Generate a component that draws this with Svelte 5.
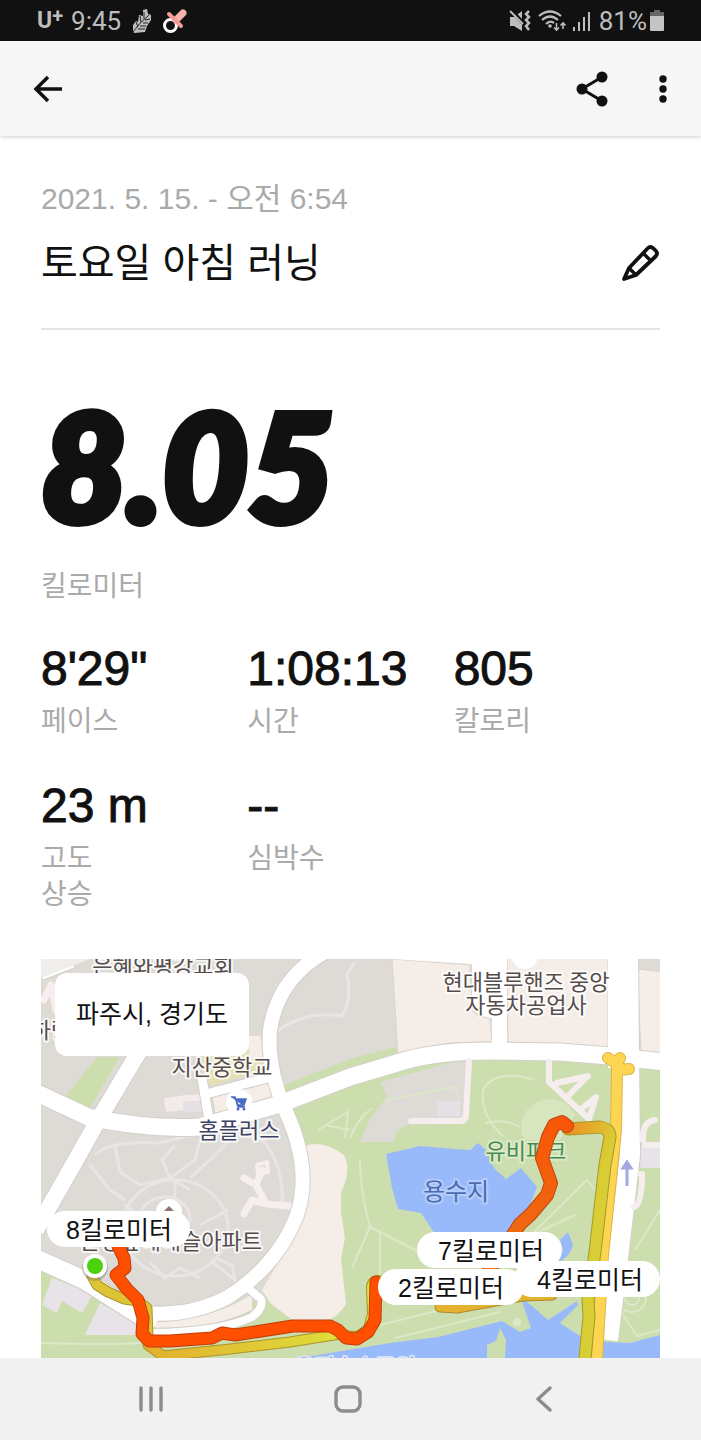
<script lang="ts">
    type Stat = { value: string; label: string };

    const stats: Stat[] = [
        { value: `8'29"`, label: '페이스' },
        { value: '1:08:13', label: '시간' },
        { value: '805', label: '칼로리' },
        { value: '23 m', label: '고도\n상승' },
        { value: '--', label: '심박수' },
    ];

    // Kilometre pills on the map, x/y is the top left corner
    const pills = [
        { x: 417, y: 1232, w: 145, textX: 491, text: '7킬로미터' },
        { x: 514, y: 1261, w: 146, textX: 590, text: '4킬로미터' },
        { x: 378, y: 1269, w: 146, textX: 451, text: '2킬로미터' },
        { x: 47, y: 1211, w: 143, textX: 119, text: '8킬로미터' },
    ];

    // Each route is drawn twice: dark casing first, then the fill
    const routes = [
        { d: 'M608 1058L617 1064L620 1058M617 1062V1070L629 1069M617 1070L616 1130L613 1160L603 1255L597 1358', fill: '#fcd552', edge: '#e0b445', w: 10 },
        { d: 'M92 1276L97 1285L108 1292L124 1299L138 1301L147 1308L148 1338', fill: '#dec434', edge: '#a9942b', w: 9 },
        { d: 'M148 1345L163 1356L230 1349L290 1342L340 1334', fill: 'url(#lowRoute)', edge: '#a9942b', w: 9 },
        { d: 'M340 1334L358 1335L367 1328L371 1314L370 1287Q371 1279 379 1279', fill: '#e3de3b', edge: '#a9942b', w: 6 },
        { d: 'M568 1129L600 1127Q610 1129 610 1137L605 1165L595 1252L588 1300L589 1316L585 1358', fill: 'url(#highRoute)', edge: '#a29a26', w: 11 },
        { d: 'M440 1307L457 1308L523 1296L552 1295', fill: '#e5b22f', edge: '#a98a2b', w: 9 },
        { d: 'M567 1126L562 1122L554 1125L548 1137L542 1158L551 1183L547 1195L531 1214L520 1224L488 1272', fill: 'url(#orangeRoute)', edge: '#bd460e', w: 12 },
        { d: 'M118 1246L124 1258L125 1268L116 1275L127 1289L138 1300L143 1318L142 1334L149 1341L170 1341L212 1338L222 1333L235 1335L293 1326H330L338 1330L346 1338L357 1339L368 1332L375 1320L376 1282', fill: '#fe5000', edge: '#c23c08', w: 11 },
    ];

    const mapLabels = [
        { x: 163, y: 974, text: '은혜와평강교회', tone: 'brown' },
        { x: 51, y: 1038, text: '하랑', tone: 'brown' },
        { x: 222, y: 1075, text: '지산중학교', tone: 'brown' },
        { x: 239, y: 1138, text: '홈플러스', tone: 'navy' },
        { x: 526, y: 990, text: '현대블루핸즈 중앙', tone: 'brown' },
        { x: 526, y: 1013, text: '자동차공업사', tone: 'brown' },
        { x: 171, y: 1249, text: '운정숲해해슬아파트', tone: 'brown' },
        { x: 355, y: 1375, text: '운정호수공원', tone: 'water' },
    ];
</script>

<div class="screen">
    <header class="status-bar">
        <div class="status-group">
            <span class="carrier">U<sup>+</sup></span>
            <span class="clock">9:45</span>
            <svg class="feather" width="20" height="26" viewBox="0 0 20 26" aria-hidden="true">
                <path d="M1 23L1 17L4 13L6 14L7 7L11 8L11 2L15 1L16 6L19 7L19 12L15 18L13 24L2 25Z" fill="#bdbdbd" />
                <path d="M1 24Q7 15 17 7M8 18L14 18M6 21L13 21M11 15L16 15M13 12L18 11M4 14L6 19M8 8L9 14M12 4L12 11" stroke="#111" stroke-width="0.900" fill="none" />
            </svg>
            <svg class="pacifier" width="26" height="26" viewBox="0 0 26 26" aria-hidden="true">
                <circle cx="8.500" cy="17.500" r="6" fill="none" stroke="#fff" stroke-width="3" />
                <path d="M14 12L21 5" stroke="#f5b3b0" stroke-width="7" stroke-linecap="round" />
                <path d="M7 6L19 18" stroke="#f29a97" stroke-width="4" stroke-linecap="round" />
            </svg>
        </div>
        <div class="status-group right">
            <svg width="22" height="22" viewBox="0 0 22 22" aria-hidden="true">
                <path d="M1 7H5L13 1V21L5 16H1Z" fill="#bdbdbd" />
                <path d="M2 0L14 13" stroke="#111" stroke-width="4" />
                <path d="M1 1L14 14" stroke="#bdbdbd" stroke-width="2" />
                <path d="M20 1L17 4L20 7L17 10L20 13L17 16L20 20" fill="none" stroke="#bdbdbd" stroke-width="2.500" />
            </svg>
            <svg width="28" height="22" viewBox="0 0 28 22" aria-hidden="true">
                <path d="M1 6Q12 -3 23 6M4 10Q12 3 20 10M8 14Q12 10 16 13" fill="none" stroke="#bdbdbd" stroke-width="2.200" />
                <circle cx="12" cy="16" r="1.800" fill="#bdbdbd" />
                <path d="M18.500 13V20M16 17.500L18.500 20L21 17.500M25 19V13M22.500 15.500L25 13L27.500 15.500" fill="none" stroke="#bdbdbd" stroke-width="1.600" />
            </svg>
            <svg width="19" height="20" viewBox="0 0 19 20" aria-hidden="true">
                <path d="M1 16V20M6 11V20M11 6V20M16 1V20" stroke="#bdbdbd" stroke-width="2" />
            </svg>
            <span class="battery-level">81%</span>
            <svg class="battery" width="14" height="22" viewBox="0 0 14 22" aria-hidden="true">
                <path d="M4 0H10V2H13Q14 2 14 3V6H0V3Q0 2 1 2H4Z" fill="#666" />
                <path d="M0 6H14V20Q14 21 13 21H1Q0 21 0 20Z" fill="#c4c4c4" />
            </svg>
        </div>
    </header>

    <nav class="app-bar">
        <button aria-label="뒤로">
            <svg width="28" height="28" viewBox="0 0 28 28" aria-hidden="true">
                <path d="M14 2L2 14L14 26M2 14H28" fill="none" stroke="#111" stroke-width="3.400" />
            </svg>
        </button>
        <div class="actions">
            <button aria-label="공유">
                <svg width="32" height="36" viewBox="0 0 32 36" aria-hidden="true">
                    <path d="M26 6L6 18L26 30" fill="none" stroke="#111" stroke-width="3" />
                    <circle cx="26" cy="6" r="5.500" fill="#111" />
                    <circle cx="6" cy="18" r="5.500" fill="#111" />
                    <circle cx="26" cy="30" r="5.500" fill="#111" />
                </svg>
            </button>
            <button aria-label="더보기">
                <svg width="8" height="28" viewBox="0 0 8 28" aria-hidden="true">
                    <circle cx="4" cy="4" r="3.700" fill="#111" />
                    <circle cx="4" cy="14" r="3.700" fill="#111" />
                    <circle cx="4" cy="24" r="3.700" fill="#111" />
                </svg>
            </button>
        </div>
    </nav>

    <main>
        <p class="date">2021. 5. 15. - 오전 6:54</p>
        <div class="title-row">
            <h1>토요일 아침 러닝</h1>
            <button aria-label="제목 수정">
                <svg width="38" height="38" viewBox="0 0 38 38" aria-hidden="true">
                    <path d="M2 35L7 24L26 4Q28 2 31 4L34 7Q36 9 34 12L14 31Z" fill="none" stroke="#111" stroke-width="3.800" stroke-linejoin="round" />
                    <path d="M21 9L29 17M7 24L14 31" stroke="#111" stroke-width="3.400" />
                    <path d="M1 37L3 30L8 34Z" fill="#111" />
                </svg>
            </button>
        </div>

        <p class="distance">8.05</p>
        <p class="label">킬로미터</p>

        <dl class="stats">
            {#each stats as stat}
                <div class="stat">
                    <dd>{stat.value}</dd>
                    <dt class="label">{stat.label}</dt>
                </div>
            {/each}
        </dl>

        <section class="map">
            <svg viewBox="41 959 619 399" role="img" aria-label="러닝 경로">
                <defs>
                    <linearGradient id="highRoute" gradientUnits="userSpaceOnUse" x1="566" y1="1128" x2="612" y2="1145">
                        <stop offset="0" stop-color="#f08c20" />
                        <stop offset="1" stop-color="#d9cd35" />
                    </linearGradient>
                    <linearGradient id="orangeRoute" gradientUnits="userSpaceOnUse" x1="560" y1="1120" x2="500" y2="1250">
                        <stop offset="0" stop-color="#f85606" />
                        <stop offset="1" stop-color="#ee6c12" />
                    </linearGradient>
                    <linearGradient id="lowRoute" gradientUnits="userSpaceOnUse" x1="150" y1="0" x2="340" y2="0">
                        <stop offset="0" stop-color="#e2b02f" />
                        <stop offset="1" stop-color="#dede3b" />
                    </linearGradient>
                </defs>

                <!-- land -->
                <rect x="41" y="959" width="619" height="399" fill="#dedbd6" />
                <g fill="#cddeae">
                    <path d="M97 1057H120L90 1108L65 1097Z" />
                    <path d="M281 1086L350 1059L396 1047L397 1062L281 1100Z" />
                    <path d="M288 1112L350 1086L407 1066L460 1056H608L660 1068V1358H41V1258L150 1325L262 1300L300 1200Z" />
                </g>
                <path d="M302 1147Q322 1138 344 1155Q352 1170 341 1193V1212L345 1238L341 1258L346 1304Q335 1322 318 1321L295 1322L270 1303L262 1290L300 1225Z" fill="#f5ede7" />
                <path d="M380 1082L467 1058L465 1123L407 1125L397 1130L393 1142H360L370 1119L387 1097Z" fill="#dedbd6" />
                <path d="M437 1101H460V1116H437Z" fill="#e4e0e6" />
                <g fill="#e7e3e8">
                    <path d="M52 1278L93 1294L82 1313L62 1301L57 1313L42 1305Z" />
                    <path d="M100 1303L140 1324V1335H85Z" />
                    <path d="M641 1145H660V1168H640Z" />
                </g>
                <g fill="#f5ede7" stroke="#dcd3ca">
                    <path d="M392 959L470 965L472 1008Q475 1018 490 1018L492 1042L450 1043L398 1054Z" />
                    <path d="M507 950H608V1049L508 1042Z" />
                    <path d="M637 969L664 972V1053L641 1051Z" />
                    <path d="M153 1322Q210 1320 252 1294L253 1310Q220 1326 156 1334Z" />
                    <path d="M212 1095L270 1082L274 1097L215 1114Z" />
                </g>
                <path d="M202 1057L260 1036L262 1070L210 1086Z" fill="#e5dfb5" />
                <path d="M248 1036H260L264 1056L250 1060Z" fill="#f5ede7" />
                <path d="M392 959L500 966V955H392Z" fill="#fff" />

                <!-- water -->
                <g fill="#98bafa">
                    <path d="M386 1154L420 1146L455 1149L470 1150L478 1143L486 1150L494 1168L506 1179L521 1168L537 1187L531 1203L510 1234H435L421 1213L398 1209L392 1188Z" />
                    <path d="M549 1262L563 1251L560 1240L568 1232L573 1245Q570 1258 555 1264Z" />
                    <path d="M300 1358L390 1343L438 1337L502 1321L520 1332L531 1328L521 1298L531 1305L548 1320L577 1301L578 1305L560 1323L580 1336L607 1342L630 1343L660 1335V1358Z" />
                </g>
                <path d="M487 1358V1345L496 1341L500 1328L506 1340L505 1358Z" fill="#cddeae" />

                <!-- park footpaths -->
                <g fill="none" stroke="#dce8c8" stroke-width="2">
                    <path d="M350 1139Q356 1120 372 1108M535 1080Q495 1068 483 1090Q480 1115 503 1136M485 1123Q505 1118 520 1127" />
                    <path d="M360 1160Q360 1190 370 1227L425 1255M370 1227L352 1268M380 1230V1275" />
                    <path d="M380 1325L500 1295M395 1338L500 1312" />
                    <path d="M530 1236L587 1180L595 1190M530 1236L575 1215M635 1250L660 1210M620 1310L637 1336L660 1330" />
                    <path d="M318 1130L348 1112L345 1138M325 1125L350 1130" />
                    <path d="M41 1343Q110 1345 140 1343M386 1100L455 1087L459 1097" />
                    <circle cx="632" cy="1298" r="14" />
                    <circle cx="632" cy="1298" r="7" />
                </g>
                <path d="M524 1140A27 27 0 0 1 575 1115L560 1140Z" fill="#d8e6c0" />
                <circle cx="517" cy="1322" r="4" fill="#dce8c8" />

                <!-- apartment lanes -->
                <g fill="none" stroke="#ebe4e4" stroke-width="3">
                    <path d="M95 1155Q110 1140 160 1143Q220 1125 265 1142Q285 1170 282 1210M90 1165L110 1190L125 1200M115 1145L120 1172L140 1185L170 1178L190 1190M175 1145L162 1160L170 1178L195 1160L200 1140M230 1140L210 1160L190 1178" />
                    <ellipse cx="175" cy="1228" rx="53" ry="48" />
                    <ellipse cx="165" cy="1218" rx="25" ry="21" />
                    <path d="M125 1205L150 1225M175 1180V1200M200 1225L228 1210M150 1262L165 1278L180 1268L200 1278M210 1260L235 1280L232 1265L215 1258" />
                </g>
                <g fill="none" stroke="#f7eeee" stroke-width="7" stroke-linejoin="round" stroke-linecap="round">
                    <path d="M244 1178L256 1185L266 1204L290 1206M256 1185L262 1170M266 1204L252 1200L244 1214" />
                    <path d="M257 1165L267 1162L268 1172L258 1174Z" stroke-width="4" />
                    <path d="M44 1000L51 985L56 1010M168 1104H200" />
                </g>
                <path d="M164 1098L186 1095L206 1094V1108L166 1112Z" fill="#f3eaea" />
                <path d="M183 1101H203V1112H183Z" fill="#e4e0e6" />
                <path d="M276 1032Q305 1010 342 1016Q352 1000 347 975L355 962M276 985L283 990" fill="none" stroke="#ebe4e4" stroke-width="3" />

                <!-- roads -->
                {#each ['#d3cfc9', '#fff'] as color, i}
                    <g fill="none" stroke={color}>
                        <path d="M35 1092L88 1117Q150 1130 200 1127L280 1104L350 1077L407 1060Q440 1051 490 1051L560 1052L610 1056L665 1062" stroke-width={19 - i * 2} />
                        <path d="M325 952Q278 978 270 1030Q267 1070 287 1114Q312 1170 297 1215Q278 1265 228 1297Q190 1317 145 1313" stroke-width={16 - i * 2} />
                        <path d="M140 1050L100 1117L73 1165L36 1230" stroke-width={18 - i * 2} />
                        <path d="M35 1258L84 1280L155 1325" stroke-width={20 - i * 2} />
                        <path d="M202 1078L209 1120M206 1094L275 1076" stroke-width={11 - i * 2} />
                        <path d="M248 1288L261 1299Q264 1308 252 1317Q220 1332 150 1333" stroke-width={10 - i * 2} />
                        <path d="M41 974L72 962M499 1050V1012" stroke-width={14 - i * 2} />
                        <path d="M628 950L630 1155L618 1258L608 1340" stroke-width={22 - i * 2} />
                    </g>
                {/each}
                <path d="M472 959V1006Q476 1016 492 1018V1046H507V959Z" fill="#fff" />
                <path d="M621 959V1068" stroke="#fff" stroke-width="26" />
                <path d="M41 959H90L41 978Z" fill="#f0eeeb" />
                <circle cx="525" cy="956" r="13" fill="#fff" />
                <g fill="none" stroke="#f6eeee" stroke-width="6" stroke-linejoin="round" stroke-linecap="round">
                    <path d="M469 1061L466 1115Q466 1121 460 1121H411" />
                    <path d="M549 1062V1082L589 1119L596 1097L580 1110M557 1083L588 1076L566 1098" />
                    <path d="M643 1140Q642 1122 655 1120M640 1174H642Q642 1205 634 1207M645 1145H660" />
                </g>
                <path d="M627 1186V1163M623 1168L627 1162L631 1168Z" stroke="#a5a9e0" stroke-width="3" fill="#a5a9e0" />

                <!-- places -->
                {#each mapLabels as { x, y, text, tone }}
                    <text class="place {tone}" {x} {y}>{text}</text>
                {/each}
                <text class="place lake" x="456" y="1200">용수지</text>
                <text class="place park" x="526" y="1159">유비파크</text>
                <circle cx="239" cy="1102" r="13" fill="#fff" />
                <path d="M231 1097H235L238 1107H245M236 1099H246L244 1105H238Z" stroke="#4f6cc4" stroke-width="1.500" fill="#4f6cc4" />
                <circle cx="238" cy="1109" r="1.500" fill="#4f6cc4" />
                <circle cx="244" cy="1109" r="1.500" fill="#4f6cc4" />
                <circle cx="169" cy="1212" r="13" fill="#fff" />
                <path d="M164 1211L169 1206L174 1211Z" fill="#8d7471" />

                <!-- run -->
                <g fill="none" stroke-linejoin="round" stroke-linecap="round">
                    {#each routes as route}
                        <path d={route.d} stroke={route.edge} stroke-width={route.w + 2} />
                        <path d={route.d} stroke={route.fill} stroke-width={route.w} />
                    {/each}
                </g>
                <circle cx="95" cy="1268" r="13" fill="#777" opacity="0.4" />
                <circle cx="95" cy="1266" r="12" fill="#fff" />
                <circle cx="95" cy="1266" r="8" fill="#4cd10f" />

                {#each pills as pill}
                    <rect x={pill.x} y={pill.y} width={pill.w} height="36" rx="18" fill="#fff" />
                    <text class="pill-text" x={pill.textX} y={pill.y + 28}>{pill.text}</text>
                {/each}
            </svg>
            <p class="region">파주시, 경기도</p>
        </section>
    </main>

    <footer class="system-nav">
        <button aria-label="최근 앱">
            <svg width="26" height="26" viewBox="0 0 26 26" aria-hidden="true">
                <path d="M3 2V24M13 2V24M23 2V24" stroke="#8c8c8c" stroke-width="3.400" stroke-linecap="round" />
            </svg>
        </button>
        <button aria-label="홈">
            <svg width="28" height="28" viewBox="0 0 28 28" aria-hidden="true">
                <rect x="2" y="2" width="24" height="24" rx="7" fill="none" stroke="#8c8c8c" stroke-width="3.400" />
            </svg>
        </button>
        <button aria-label="이전">
            <svg width="26" height="26" viewBox="0 0 26 26" aria-hidden="true">
                <path d="M19 2L7 13L19 24" fill="none" stroke="#8c8c8c" stroke-width="3.400" stroke-linecap="round" stroke-linejoin="round" />
            </svg>
        </button>
    </footer>
</div>

<style>
    :global(body) {
        background: #fff;
    }
    .screen {
        display: flex;
        flex-direction: column;
        min-height: 100vh;
        font-family: "Liberation Sans", "Noto Sans CJK KR", sans-serif;
        color: #111;
    }
    p, h1, dl, dd {
        margin: 0;
    }
    svg {
        display: block;
    }
    button {
        display: flex;
        padding: 0;
        border: 0;
        background: none;
        cursor: pointer;
    }
    .status-bar {
        display: flex;
        justify-content: space-between;
        align-items: center;
        height: 41px;
        padding: 0 37px;
        background: #111;
        color: #bdbdbd;
        font-family: Roboto, sans-serif;
        font-size: 26px;
    }
    .status-group {
        display: flex;
        align-items: center;
    }
    .right {
        gap: 7px;
    }
    .carrier {
        font-weight: 700;
        font-size: 23px;
        line-height: 28px;
        margin-right: 8px;
    }
    .carrier sup {
        font-size: 20px;
        line-height: 0;
        vertical-align: 5px;
    }
    .feather {
        margin: 0 10px 0 11px;
    }
    .battery {
        margin-left: -4px;
    }
    .app-bar {
        display: flex;
        justify-content: space-between;
        align-items: center;
        height: 95px;
        padding: 0 34px;
        background: #f6f6f6;
        box-shadow: 0 1px 4px rgba(0, 0, 0, 0.2);
    }
    .actions {
        display: flex;
        align-items: center;
        gap: 51px;
    }
    main {
        flex: 1;
        padding: 45px 41px 0;
    }
    .date {
        font-size: 30px;
        line-height: 36px;
        color: #aaa;
    }
    .title-row {
        display: flex;
        justify-content: space-between;
        align-items: center;
        margin-top: 16px;
        padding-bottom: 35px;
        border-bottom: 2px solid #e4e4e4;
    }
    h1 {
        font-size: 40px;
        line-height: 60px;
        font-weight: 400;
    }
    .distance {
        margin-top: 75px;
        font-family: Lato, sans-serif;
        font-size: 148px;
        line-height: 120px;
        font-weight: 900;
        font-style: italic;
        -webkit-text-stroke: 8px #111;
    }
    .label {
        font-size: 28px;
        line-height: 36px;
        color: #aaa;
        white-space: pre-line;
    }
    .distance + .label {
        margin-top: 44px;
    }
    .stats {
        display: grid;
        grid-template-columns: repeat(3, 1fr);
        row-gap: 38px;
        margin-top: 36px;
    }
    .stat {
        display: flex;
        flex-direction: column;
        gap: 7px;
    }
    dd {
        font-size: 48px;
        line-height: 56px;
        -webkit-text-stroke: 1px #111;
    }
    .map {
        position: relative;
        margin-top: 46px;
    }
    .map svg {
        width: 100%;
        height: auto;
    }
    .region {
        position: absolute;
        top: 14px;
        left: 14px;
        padding: 0 21px;
        border-radius: 12px;
        background: #fff;
        font-size: 25px;
        line-height: 83px;
    }
    .place {
        font-family: "Noto Sans CJK KR", sans-serif;
        font-size: 22px;
        text-anchor: middle;
        stroke: rgba(255, 255, 255, 0.8);
        stroke-width: 4px;
        stroke-linejoin: round;
        paint-order: stroke;
    }
    .brown {
        fill: #554c4b;
    }
    .navy {
        fill: #3c4263;
    }
    .lake {
        fill: #4c6bb0;
        font-size: 24px;
        stroke: #b4cdfb;
    }
    .park {
        fill: #4a8a50;
        stroke: #dcebc8;
    }
    .water {
        fill: #7d9bd8;
        stroke: #d5e2f5;
    }
    .pill-text {
        font-size: 25px;
        text-anchor: middle;
        fill: #111;
    }
    .system-nav {
        display: flex;
        justify-content: space-between;
        align-items: center;
        height: 82px;
        padding: 0 144px 0 138px;
        background: #f1f1f1;
    }
</style>
